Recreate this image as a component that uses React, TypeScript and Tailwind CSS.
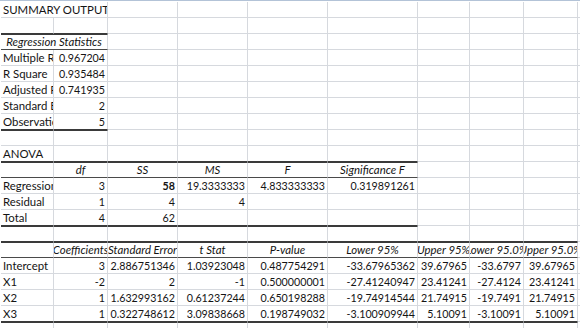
import React from 'react';

type Align = 'l' | 'r' | 'c';

interface Cell {
  t?: string;
  span?: number;
  a?: Align;
  i?: boolean;
  b?: boolean;
}

interface Row {
  cells: Cell[];
  darkTop?: number; // how many columns (from A) get a dark top edge
  darkBottom?: number;
  thinBottom?: number;
}

// column widths, A..I plus a sliver of J
const widths = [53, 54, 70, 70, 80, 90, 52, 54, 54, 3];

const num = (t: string, extra: Partial<Cell> = {}): Cell => ({ t, a: 'r', ...extra });
const head = (t: string): Cell => ({ t, a: 'c', i: true });

const rows: Row[] = [
  { cells: [{ t: 'SUMMARY OUTPUT', span: 2 }] },
  { cells: [], darkBottom: 2 },
  { cells: [{ t: 'Regression Statistics', span: 2, a: 'c', i: true }], darkTop: 2, thinBottom: 2 },
  { cells: [{ t: 'Multiple R' }, num('0.967204')] },
  { cells: [{ t: 'R Square' }, num('0.935484')] },
  { cells: [{ t: 'Adjusted R Square' }, num('0.741935')] },
  { cells: [{ t: 'Standard Error' }, num('2')] },
  { cells: [{ t: 'Observations' }, num('5')], darkBottom: 2 },
  { cells: [], darkTop: 2 },
  { cells: [{ t: 'ANOVA' }], darkBottom: 6 },
  {
    cells: [{}, head('df'), head('SS'), head('MS'), head('F'), head('Significance F')],
    darkTop: 6,
    thinBottom: 6,
  },
  {
    cells: [
      { t: 'Regression' },
      num('3'),
      num('58', { b: true }),
      num('19.3333333'),
      num('4.833333333'),
      num('0.319891261'),
    ],
  },
  { cells: [{ t: 'Residual' }, num('1'), num('4'), num('4')] },
  { cells: [{ t: 'Total' }, num('4'), num('62')], darkBottom: 6 },
  { cells: [], darkTop: 6, darkBottom: 9 },
  {
    cells: [
      {},
      head('Coefficients'),
      head('Standard Error'),
      head('t Stat'),
      head('P-value'),
      head('Lower 95%'),
      head('Upper 95%'),
      head('Lower 95.0%'),
      head('Upper 95.0%'),
    ],
    darkTop: 9,
    thinBottom: 9,
  },
  {
    cells: [
      { t: 'Intercept' },
      num('3'),
      num('2.886751346'),
      num('1.03923048'),
      num('0.487754291'),
      num('-33.67965362'),
      num('39.67965'),
      num('-33.6797'),
      num('39.67965'),
    ],
  },
  {
    cells: [
      { t: 'X1' },
      num('-2'),
      num('2'),
      num('-1'),
      num('0.500000001'),
      num('-27.41240947'),
      num('23.41241'),
      num('-27.4124'),
      num('23.41241'),
    ],
  },
  {
    cells: [
      { t: 'X2' },
      num('1'),
      num('1.632993162'),
      num('0.61237244'),
      num('0.650198288'),
      num('-19.74914544'),
      num('21.74915'),
      num('-19.7491'),
      num('21.74915'),
    ],
  },
  {
    cells: [
      { t: 'X3' },
      num('1'),
      num('0.322748612'),
      num('3.09838668'),
      num('0.198749032'),
      num('-3.100909944'),
      num('5.10091'),
      num('-3.10091'),
      num('5.10091'),
    ],
    darkBottom: 9,
  },
  { cells: [], darkTop: 9 },
];

function SheetRow({ row }: { row: Row }) {
  // expand cells to fill all columns, honouring spans
  const out: { cell: Cell; col: number; w: number }[] = [];
  let col = 0;
  row.cells.forEach((cell) => {
    const span = cell.span ?? 1;
    const w = widths.slice(col, col + span).reduce((s, n) => s + n, 0);
    out.push({ cell, col, w });
    col += span;
  });
  while (col < widths.length) {
    out.push({ cell: {}, col, w: widths[col] });
    col += 1;
  }

  return (
    <div className="flex h-4 shrink-0">
      {out.map(({ cell, col: c, w }) => {
        const span = cell.span ?? 1;
        const last = c + span - 1;
        const darkB = row.darkBottom !== undefined && last < row.darkBottom;
        const thinB = row.thinBottom !== undefined && last < row.thinBottom;
        const darkT = row.darkTop !== undefined && last < row.darkTop;
        const align = cell.a ?? 'l';
        return (
          <div
            key={c}
            style={{ width: w }}
            className={`flex shrink-0 items-end overflow-hidden whitespace-nowrap border-r border-b border-r-[#d6d9de] px-[2px] pb-[1px] ${
              darkB ? 'border-b-[#3a3a3a]' : thinB ? 'border-b-[#4a4a4a]' : 'border-b-[#d6d9de]'
            } ${darkT ? 'border-t border-t-[#3a3a3a]' : ''} ${
              align === 'r' ? 'justify-end' : align === 'c' ? 'justify-center' : 'justify-start'
            }`}
          >
            {cell.t && (
              <span
                className={`shrink-0 leading-[13px] text-[#141414] ${
                  align === 'r' ? 'text-[10.7px]' : 'text-[11.4px]'
                } ${cell.i ? 'italic' : ''} ${cell.b ? 'font-bold' : ''}`}
              >
                {cell.t}
              </span>
            )}
          </div>
        );
      })}
    </div>
  );
}

export default function App() {
  return (
    <div
      className="flex h-[328px] w-[580px] flex-col overflow-hidden bg-white"
      style={{ fontFamily: 'Lato, "Open Sans", sans-serif' }}
    >
      <div className="h-px shrink-0 bg-[#b3c3d7]" />
      <div className="h-px shrink-0" />
      <div className="flex flex-col pl-px">
        {rows.map((row, i) => (
          <SheetRow key={i} row={row} />
        ))}
      </div>
    </div>
  );
}
